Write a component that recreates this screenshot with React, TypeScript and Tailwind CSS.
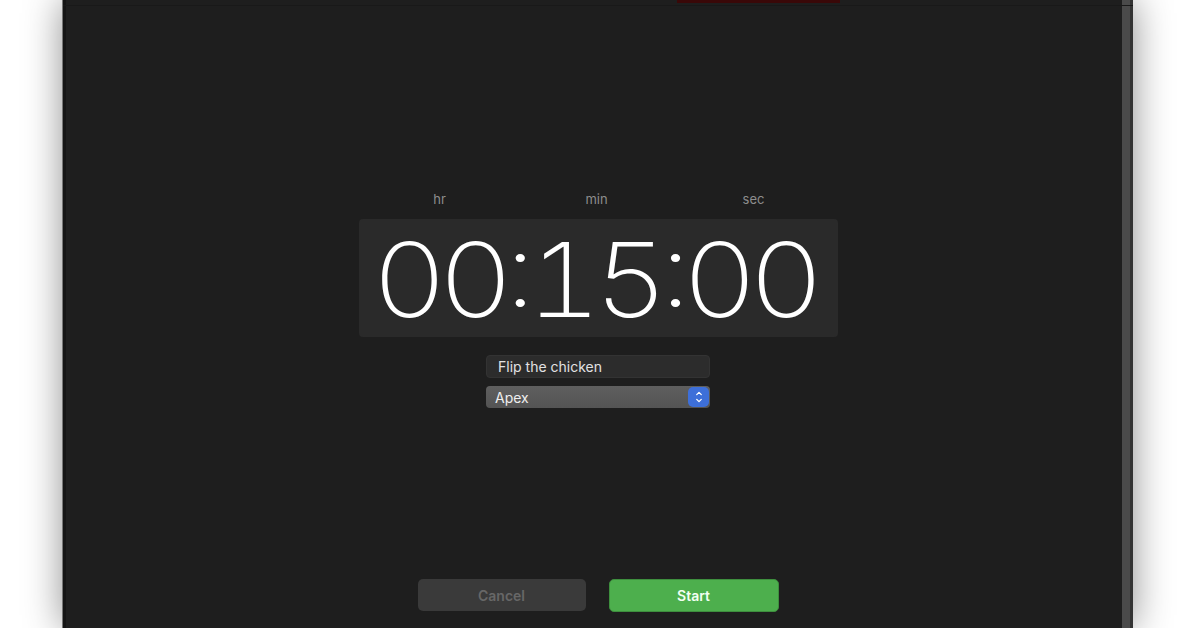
import { ChevronUp, ChevronDown } from 'lucide-react';

const digits = ['0', '0', ':', '1', '5', ':', '0', '0'];

export default function App() {
  return (
    <div className="w-[1196px] h-[628px] overflow-hidden bg-white flex justify-center" style={{ fontFamily: 'Inter, "Noto Sans", sans-serif' }}>
      <div className="w-[1070px] h-full bg-[#1e1e1e] flex flex-col items-center shadow-[inset_3px_0_0_#151515,inset_-3px_0_0_#333333,inset_-11px_0_0_#4a4a4a,-1px_0_0_#777777,0_0_36px_rgba(0,0,0,0.45)]">
        {/* barra superior */}
        <div className="w-full h-[6px] border-b border-[#191919] flex">
          <div className="ml-[614px] w-[163px] h-[3px] bg-[#3a0808]" />
        </div>

        {/* etiquetas */}
        <div className="mt-[185px] w-[479px] h-[16px] flex text-[13px] leading-[16px] text-[#8d8d8d]">
          <span className="ml-[74px] w-[14px] text-center">hr</span>
          <span className="ml-[137px] w-[26px] text-center">min</span>
          <span className="ml-[131px] w-[26px] text-center">sec</span>
        </div>

        {/* caja del temporizador */}
        <div className="mt-[12px] w-[479px] h-[118px] bg-[#2a2a2a] rounded-[4px] flex items-center justify-center">
          <div className="flex text-white text-[103px] leading-none font-[200] tracking-[-8px] [font-feature-settings:'case','tnum'] scale-x-[1.135] translate-x-[-5px] translate-y-[1px]">
            {digits.map((d, i) => (
              <span key={i}>{d}</span>
            ))}
          </div>
        </div>

        {/* campos */}
        <div className="mt-[18px] w-[224px] flex flex-col gap-[8px]">
          <div className="h-[23px] bg-[#2c2c2c] border border-[#333333] rounded-[4px] px-[11px] flex items-center text-[14px] text-[#e2e2e2]">
            Flip the chicken
          </div>
          <div className="h-[22px] bg-gradient-to-b from-[#5f5f5f] to-[#545454] rounded-[4px] pl-[9px] pr-[1px] flex items-center justify-between text-[14px] text-[#eeeeee]">
            <span>Apex</span>
            <span className="w-[21px] h-[20px] bg-[#3d6fd9] rounded-[5px] flex flex-col items-center justify-center text-white">
              <ChevronUp className="w-[12px] h-[9px] -mb-[1px]" strokeWidth={3.5} />
              <ChevronDown className="w-[12px] h-[9px] -mt-[1px]" strokeWidth={3.5} />
            </span>
          </div>
        </div>

        {/* botones */}
        <div className="mt-[171px] flex gap-[23px]">
          <button className="w-[168px] h-[32px] bg-[#3a3a3a] rounded-[5px] text-[14px] font-semibold text-[#676767]">
            Cancel
          </button>
          <button className="w-[170px] h-[33px] bg-[#4daf4d] border border-[#3e8f3e] rounded-[5px] text-[14px] font-semibold text-[#f2fff2]">
            Start
          </button>
        </div>
      </div>
    </div>
  );
}
